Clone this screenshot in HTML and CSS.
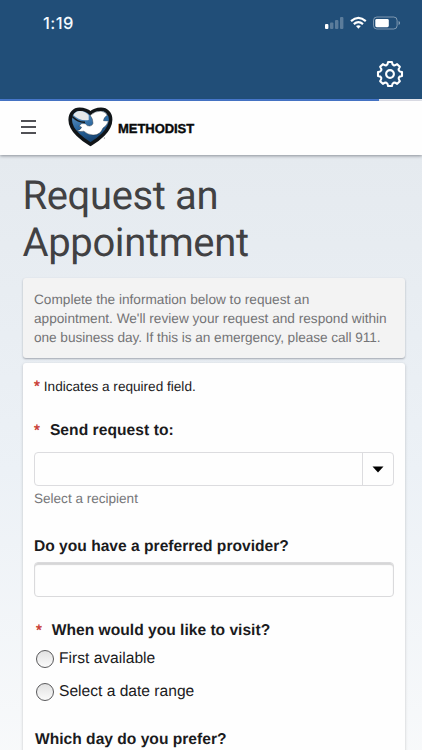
FILE: index.html
```html
<!DOCTYPE html>
<html lang="en">
<head>
<meta charset="utf-8">
<title>Request an Appointment</title>
<link rel="stylesheet" href="styles.css">
</head>
<body>
<div class="topbar">
  <div class="status">
    <span class="clock">1:19</span>
    <svg class="indicators" width="78" height="16" viewBox="0 0 78 16">
      <rect x="1" y="9" width="3.4" height="5" rx="1" fill="#fff"/>
      <g fill="#fff" opacity=".26"><rect x="6" y="7.5" width="3.4" height="6.5" rx="1"/><rect x="11" y="5" width="3.4" height="9" rx="1"/><rect x="16" y="2" width="3.4" height="12" rx="1"/></g>
      <g fill="none" stroke="#fff" stroke-width="2.1"><path d="M27 6.1Q34.4-.5 41.8 6.1"/><path d="M29.8 9.1Q34.4 5.1 39 9.1"/></g>
      <path d="M32 11.1Q34.4 9.2 36.8 11.1L34.4 13.7Z" fill="#fff"/>
      <rect x="49.5" y="2" width="23.6" height="12" rx="3.4" fill="none" stroke="#fff" opacity=".42"/>
      <rect x="51.3" y="4" width="13.5" height="8.2" rx="1.4" fill="#fff"/>
      <path d="M74.6 6Q76 6.6 76 8T74.6 10Z" fill="#fff" opacity=".5"/>
    </svg>
  </div>
  <svg class="gear" width="30" height="30" viewBox="-15 -15 30 30" fill="none" stroke="#fff" stroke-width="2.1" stroke-linejoin="round">
    <path d="M-1.9-12L1.9-12C2.4-8.4 4.24-7.64 7.14-9.83L9.83-7.14C7.64-4.24 8.4-2.4 12-1.9L12 1.9C8.4 2.4 7.64 4.24 9.83 7.14L7.14 9.83C4.24 7.64 2.4 8.4 1.9 12L-1.9 12C-2.4 8.4-4.24 7.64-7.14 9.83L-9.83 7.14C-7.64 4.24-8.4 2.4-12 1.9L-12-1.9C-8.4-2.4-7.64-4.24-9.83-7.14L-7.14-9.83C-4.24-7.64-2.4-8.4-1.9-12Z"/>
    <circle r="3.9"/>
  </svg>
</div>
<div class="progress"><div class="progress-fill"></div></div>
<header class="site">
  <div class="burger"><i></i><i></i><i></i></div>
  <svg class="heart" width="46" height="40" viewBox="0 0 46 40">
    <defs><linearGradient id="blue" x1="0" y1="0" x2=".3" y2="1"><stop offset="0" stop-color="#6ba0ce"/><stop offset=".6" stop-color="#28649c"/><stop offset="1" stop-color="#16416d"/></linearGradient></defs>
    <path d="M22.5 37.2C16 33.5 2.2 24 2.2 12.7C2.2 6.3 6.2 2.3 11.5 2.3C16.5 2.3 19.8 3.7 22.5 6.3C25.2 3.7 28.5 2.3 33 2.3C38.7 2.3 42.6 6.5 42.6 12.5C42.6 24 29 33.5 22.5 37.2Z" fill="url(#blue)" stroke="#111518" stroke-width="3.6"/>
    <path d="M5.3 8Q8 4 12 4.1Q17.3 4.4 20.7 8.2V13Q12 14.5 5.3 8Z" fill="#e4e8ea"/>
    <path d="M4.2 9.5Q10.5 15.7 17 15.2" fill="none" stroke="#15191c" stroke-width="1.6"/>
    <path d="M22.2 8.2Q27.5 3.8 33 4.1Q37.7 4.7 39.2 8.2Q35.6 10.5 35.5 13.7L40.4 14Q39.5 18 35 21Q32 28.5 25 28Q19.5 27.7 15.8 24.2Q12.5 25 8.6 23.8Q13 22.8 13.6 20.2Q11.8 19 10.8 19.2L13.8 16.6Q17.8 15.8 19.3 18.6Q24 20 25 16.3Q25.2 12 22.2 8.2Z" fill="#fff" stroke="#1a2229" stroke-width=".4"/>
    <path d="M36 13.4Q36.5 10.4 40.2 9L40.5 13.7Z" fill="#2d6ca5"/>
    <circle cx="36.4" cy="31" r=".6" fill="#777"/>
  </svg>
  <span class="brand">METHODIST</span>
</header>
<main>
  <h1>Request an<br>Appointment</h1>
  <p class="notice">Complete the information below to request an<br>appointment. We'll review your request and respond within<br><span class="last-line">one business day. If this is an emergency, please call 911.</span></p>
  <form class="card">
    <div class="required"><b class="star">*</b><span>Indicates a required field.</span></div>
    <div class="label send"><b class="star">*</b><span>Send request to:</span></div>
    <div class="combo"><div class="arrow"><svg width="12" height="7" viewBox="0 0 12 7"><path d="M.5.5H11.5L6 6.5Z"/></svg></div></div>
    <div class="hint">Select a recipient</div>
    <div class="label provider">Do you have a preferred provider?</div>
    <div class="field"></div>
    <div class="label visit"><b class="star">*</b><span>When would you like to visit?</span></div>
    <div class="option"><i class="radio"></i><span>First available</span></div>
    <div class="option second-option"><i class="radio"></i><span>Select a date range</span></div>
    <div class="label day">Which day do you prefer?</div>
  </form>
</main>
</body>
</html>
```
FILE: styles.css
```css
* { box-sizing: border-box; }
html, body { height: 750px; overflow: hidden; }
body {
  margin: 0;
  display: flex;
  flex-direction: column;
  font-family: "Liberation Sans", Arial, sans-serif;
  color: #1b1b1d;
  white-space: nowrap;
  text-rendering: geometricPrecision;
}
svg { display: block; flex: none; }
.topbar {
  flex: none;
  height: 99px;
  background: #214e78;
  padding: 14px 17px 0 43px;
  display: flex;
  flex-direction: column;
}
.status { display: flex; justify-content: space-between; height: 18px; padding-right: 3px; }
.clock { font: 500 16.5px/19px Inter, sans-serif; color: #f4faff; letter-spacing: .4px; }
.indicators { margin-top: 1px; }
.gear { align-self: flex-end; margin-top: 27px; }
.progress { flex: none; height: 2px; background: #e8eaf2; }
.progress-fill { width: 379px; height: 2px; background: #4779cf; }
.site {
  flex: none;
  height: 54px;
  background: #fefefe;
  display: flex;
  padding-left: 21px;
  box-shadow: 0 1px 3px rgba(50, 55, 65, .5);
  z-index: 1;
}
.burger { width: 15px; margin-top: 19px; display: flex; flex-direction: column; gap: 4px; }
.burger i { height: 2px; background: #505055; }
.heart { margin: 6px 0 0 32px; }
.brand { font: 700 13px/16px "Liberation Sans", Arial, sans-serif; margin: 20px 0 0 4px; color: #080a0b; letter-spacing: -.05px; -webkit-text-stroke: .4px #080a0b; }
main {
  flex: 1;
  padding: 17px 17px 0 23px;
  background: linear-gradient(#e5eaef, #ecf1f6 50%, #f9fafb);
}
h1 { margin: 0 0 0 -.5px; font: 400 40px/47px Roboto, sans-serif; letter-spacing: -.37px; color: #414143; height: 106px; }
.notice {
  margin: 0 0 5px;
  height: 80px;
  padding: 12px 11px 0;
  font-size: 13.65px;
  line-height: 19px;
  color: #747476;
  background: #f3f3f3;
  border-radius: 3px;
  box-shadow: 0 1px 2px rgba(70, 75, 90, .45);
}
.last-line { letter-spacing: -.05px; }
.card {
  height: 420px;
  padding: 15px 12px 0 11px;
  background: #fefefe;
  border-radius: 3px;
  box-shadow: 0 1px 3px rgba(60, 60, 70, .28);
}
.star { color: #c8372f; font-size: 15px; font-weight: 400; -webkit-text-stroke: .4px #c8372f; }
.required { display: flex; font-size: 13.6px; line-height: 18px; height: 43px; gap: 4px; }
.label { display: flex; font-size: 15.6px; font-weight: 700; line-height: 20px; }
.send { height: 31px; gap: 10px; letter-spacing: .05px; }
.combo {
  height: 34px;
  border: 1px solid #dcdcdf;
  border-radius: 4px;
  display: flex;
  justify-content: flex-end;
  margin-right: -1px;
}
.arrow { width: 31px; border-left: 1px solid #dcdcdf; display: flex; align-items: center; justify-content: center; }
.hint { font-size: 13.55px; line-height: 18px; margin-top: 4px; color: #77777a; }
.provider { margin-top: 29px; }
.field { height: 35px; margin: 5px -1px 0 0; border: 1px solid #dadadc; border-radius: 4px; box-shadow: inset 0 2px 1px #d6d6d7; }
.visit { margin: 24px 0 0 2px; gap: 10px; }
.option { display: flex; align-items: center; height: 18px; margin: 9px 0 0 2px; gap: 5px; font-size: 15.6px; }
.option span { margin-top: 0; }
.second-option { margin-top: 15px; }
.radio { width: 18px; height: 18px; border-radius: 50%; border: 1px solid #59595b; background: linear-gradient(#e2e2e2, #fafafa); }
.day { margin: 29px 0 0 1px; }
```
